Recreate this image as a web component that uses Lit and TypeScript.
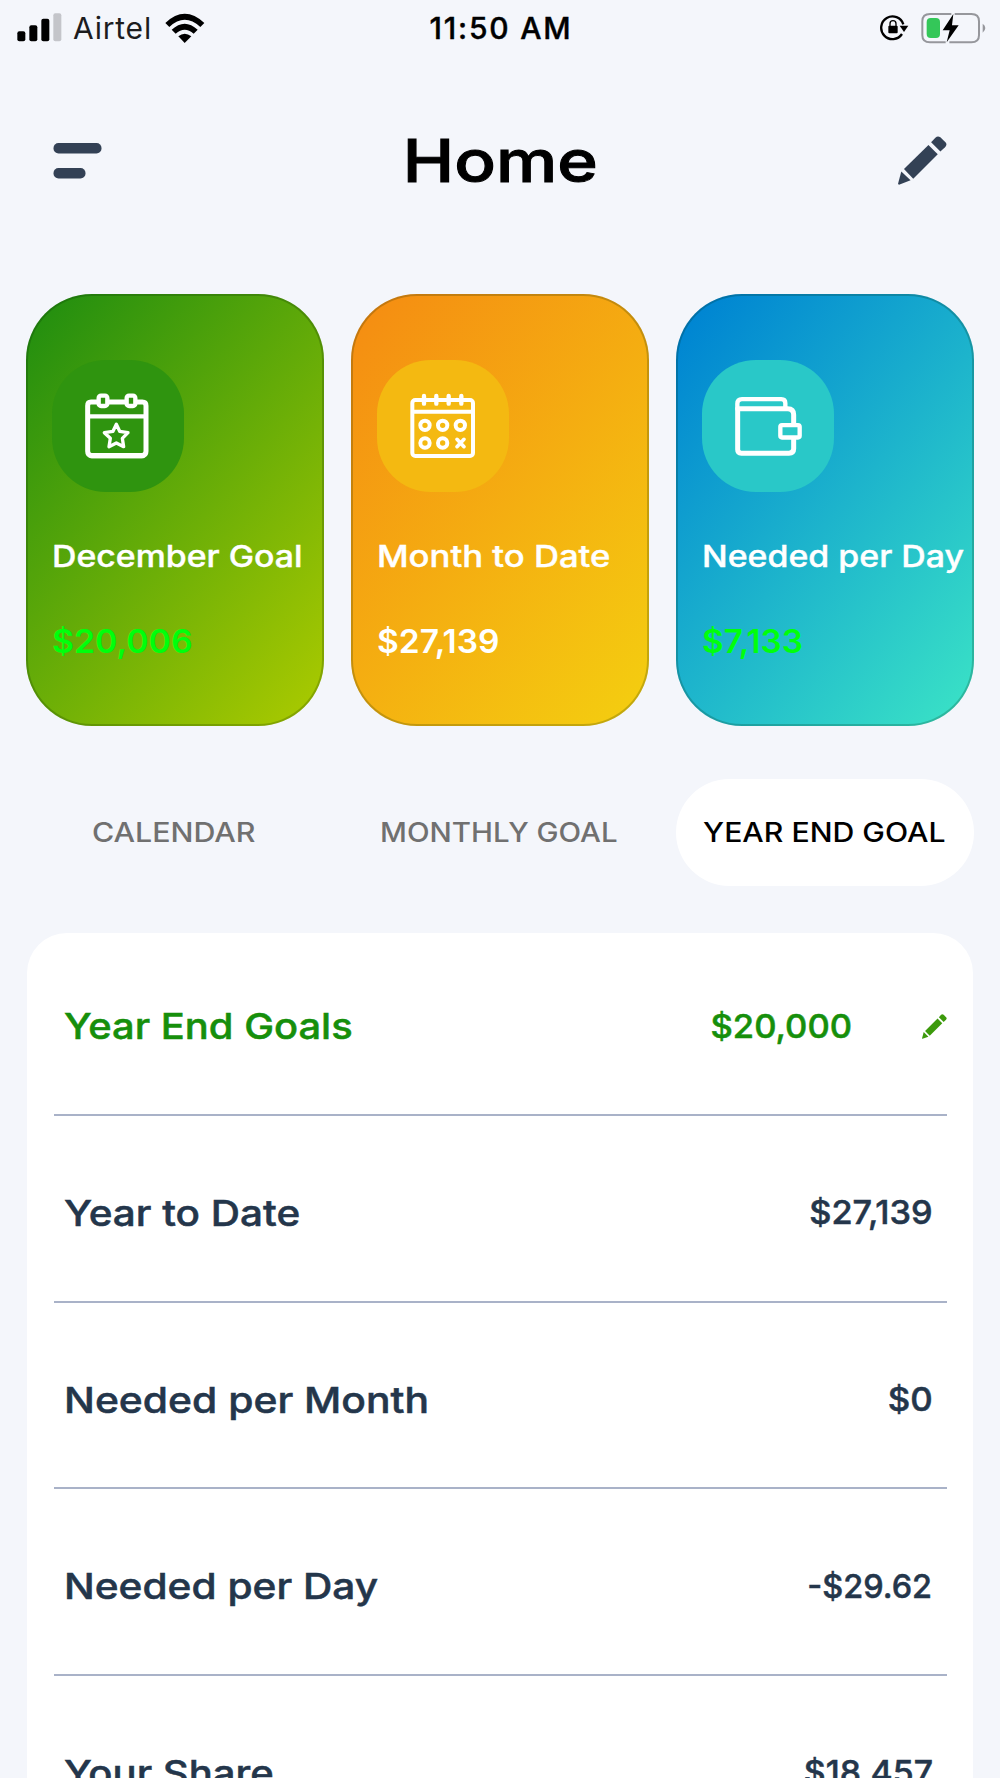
import { LitElement, html, svg, css } from "lit";
import { customElement, property } from "lit/decorators.js";
import { styleMap } from "lit/directives/style-map.js";
import { classMap } from "lit/directives/class-map.js";

type Origin = "left" | "center" | "right";

/* A single line of text whose glyphs are widened by a factor. */
@customElement("wide-text")
class WideText extends LitElement {
  @property({ type: Number }) factor = 1;
  @property() origin: Origin = "left";
  static styles = css`
    :host { display: inline-block; white-space: nowrap; line-height: 1; }
    .text { display: inline-block; }
  `;
  render() {
    return html`<span class="text" style=${styleMap({
      transform: `scaleX(${this.factor})`,
      transformOrigin: `${this.origin} center`,
    })}><slot></slot></span>`;
  }
}

const pencil = html`<svg viewBox="54 49 148 148" fill="currentColor">
  <path d="M64 156 L92 183 L57 196 Q54 196 54.500 192 Z"/>
  <path d="M72 149 L146 76 L174 104 L100 178 Z"/>
  <path d="M154 68 L167 54 Q174 48 182 53 L198 69 Q203 75 196 83 L182 96 Z"/>
</svg>`;

const starCalendar = html`<svg viewBox="97 240 396 396" fill="none" stroke="#fff" stroke-linejoin="round" stroke-linecap="round">
  <path stroke-width="15" d="M232 366H214Q204 366 204 377V514Q204 527 217 527H366Q379 527 379 514V377Q379 366 368 366H352M268 366H316"/>
  <path stroke-width="13" stroke-linecap="butt" d="M208 409H375"/>
  <path stroke-width="16" d="M216 527H368"/>
  <rect stroke-width="13" x="237" y="347" width="26" height="31" rx="7"/>
  <rect stroke-width="13" x="321" y="347" width="26" height="31" rx="7"/>
  <path stroke-width="10" d="M290 433L300 454L325 458L308 475L312 500L290 489L268 500L272 475L254 458L280 454Z"/>
</svg>`;

const rings = [[257, 436], [310, 436], [363, 436], [257, 489], [310, 489]];
const dotCalendar = html`<svg viewBox="113 240 396 396" fill="none" stroke="#fff" stroke-linejoin="round" stroke-linecap="round">
  <rect stroke-width="12" x="219" y="360" width="182" height="168" rx="9"/>
  <path stroke-width="12" d="M222 395H398"/>
  <path stroke-width="13" d="M254 348V371M291 348V371M328 348V371M366 348V371"/>
  ${rings.map(([x, y]) => svg`<circle stroke-width="12" cx=${x} cy=${y} r="14"/>`)}
  <path stroke-width="11" d="M353 478L374 500M374 478L353 500"/>
</svg>`;

const wallet = html`<svg viewBox="129 242 396 393" fill="none" stroke="#fff" stroke-width="15" stroke-linejoin="round" stroke-linecap="round">
  <path d="M404 430V405Q404 387 386 387H236V509Q236 520 247 520H390Q404 520 404 507V480"/>
  <path stroke-width="13" d="M235 387V372Q235 358 249 358H367Q379 358 379 370V384"/>
  <rect stroke-width="13" x="364" y="436" width="58" height="37" rx="5"/>
</svg>`;

const cards = [
  { kind: "green", icon: starCalendar, label: "December Goal", lf: 1.128, value: "$20,006", vf: 1.025, lime: true },
  { kind: "amber", icon: dotCalendar, label: "Month to Date", lf: 1.155, value: "$27,139", vf: 1.016, lime: false },
  { kind: "blue", icon: wallet, label: "Needed per Day", lf: 1.13, value: "$7,133", vf: 1.011, lime: true },
];

const tabs = [
  { label: "CALENDAR", f: 1.125, active: false },
  { label: "MONTHLY GOAL", f: 1.091, active: false },
  { label: "YEAR END GOAL", f: 1.119, active: true },
];

const rows = [
  { label: "Year End Goals", lf: 1.108, value: "$20,000", vf: 1.048, edit: true },
  { label: "Year to Date", lf: 1.124, value: "$27,139", vf: 1.04, edit: false },
  { label: "Needed per Month", lf: 1.134, value: "$0", vf: 1.055, edit: false },
  { label: "Needed per Day", lf: 1.129, value: "-$29.62", vf: 0.982, edit: false },
  { label: "Your Share", lf: 1.112, value: "$18,457", vf: 1.025, edit: false },
];

@customElement("app-root")
class AppRoot extends LitElement {
  static styles = css`
    :host {
      display: flex; flex-direction: column; box-sizing: border-box;
      width: 1000px; height: 1778px; overflow: hidden;
      background: #f4f6fb; color: #000;
      font-family: Inter, "Liberation Sans", sans-serif; font-weight: 500;
    }
    svg { display: block; }
    .status { flex: none; display: grid; grid-template-columns: 1fr auto 1fr; align-items: center; height: 55px; padding: 0 14px 0 17px; font-size: 30px; line-height: 1.2; }
    .status .side { display: flex; align-items: center; }
    .status .end { justify-content: flex-end; gap: 12px; }
    .carrier { font-weight: 400; letter-spacing: .8px; color: #1c1c1e; margin: 0 13px 0 11px; }
    .clock { letter-spacing: 1.8px; margin-right: 1px; -webkit-text-stroke: .4px; }
    .header { flex: none; display: grid; grid-template-columns: 1fr auto 1fr; align-items: center; height: 112px; margin-top: 49.500px; padding: 0 53px; font-size: 59px; -webkit-text-stroke: 1px; }
    .header svg { -webkit-text-stroke: 0; }
    .header .glyph { color: #334155; }
    .menu { width: 49px; height: 36px; }
    .edit { width: 49px; height: 49px; justify-self: end; }
    .cards { flex: none; display: grid; grid-template-columns: repeat(3, 298px); gap: 27px; padding: 0 26px; margin-top: 77px; }
    .card { box-sizing: border-box; height: 432.500px; border-radius: 66px; padding: 66.500px 0 0 26.400px; color: #fff; box-shadow: inset 0 0 0 2px rgba(0, 30, 0, .2); }
    .green { background: linear-gradient(130deg, #26900f 6%, #aaca00 98%); }
    .amber { background: linear-gradient(130deg, #f58f12 6%, #f4ce10 98%); }
    .blue { background: linear-gradient(130deg, #0086d2 6%, #3ae2c6 98%); }
    .badge { width: 132px; height: 132px; border-radius: 54px; }
    .green .badge { background: #2f940f; }
    .amber .badge { background: #f4b911; }
    .blue .badge { background: #29c8c8; }
    .badge svg { width: 132px; height: 132px; }
    .label { font-size: 30px; height: 30px; line-height: 30px; margin-top: 48.500px; display: flex; -webkit-text-stroke: .4px; }
    .value { font-size: 33px; height: 33px; line-height: 33px; margin-top: 54px; display: flex; font-weight: 600; }
    .lime { color: #00ff0c; }
    .tabs { flex: none; display: grid; grid-template-columns: repeat(3, 298px); gap: 27px; padding: 0 26px; margin-top: 53px; }
    .tab { box-sizing: border-box; padding-right: 2px; height: 106.500px; border-radius: 54px; display: flex; align-items: center; justify-content: center; font-size: 27px; color: #707070; }
    .tab.active { background: #fff; color: #000; }
    .panel { box-sizing: border-box; flex: none; height: 860px; margin: 47px 27px 0; padding: 0 26.500px; background: #fff; border-radius: 40px 40px 0 0; color: #24364b; }
    .row { box-sizing: border-box; height: 186.700px; padding: 9px 14px 0 10px; border-bottom: 2.500px solid #a9b2c8; display: flex; align-items: center; justify-content: space-between; font-size: 36px; -webkit-text-stroke: .5px; }
    .row.first { height: 183.500px; padding-top: 6px; padding-right: 0; color: #168f0b; }
    .amount { display: flex; align-items: center; font-size: 33px; }
    .pen { width: 25px; height: 25px; margin-left: 69px; color: #3c9a0c; }
  `;

  render() {
    return html`
      <div class="status">
        <div class="side">
          <svg width="45" height="30" viewBox="51 35 135 90">
            <rect x="52" y="90" width="24" height="30" rx="6"/><rect x="88" y="72" width="24" height="48" rx="6"/>
            <rect x="124" y="52" width="24" height="68" rx="6"/><rect x="160" y="36" width="24" height="84" rx="6" fill="#c4c5ca"/>
          </svg>
          <span class="carrier">Airtel</span>
          <svg width="40" height="30" viewBox="495 35 120 90">
            <path d="M496 65Q554 10 613 65L601 77Q554 34 508 77Z"/>
            <path d="M515 85Q554 49 593 85L581 97Q554 73 527 97Z"/>
            <path d="M535 105Q554 89 574 105L554 125Z"/>
          </svg>
        </div>
        <span class="clock">11:50 AM</span>
        <div class="side end">
          <svg width="29" height="27" viewBox="29 42 87 81">
            <path d="M99 73A34 34 0 1 0 95 102" fill="none" stroke="#000" stroke-width="7"/>
            <path d="M88 77H114L101 96Z"/>
            <rect x="54" y="77" width="28" height="23" rx="3"/>
            <path d="M59 79V71Q59 62 68 62T77 71V79" fill="none" stroke="#000" stroke-width="4"/>
          </svg>
          <svg width="65" height="32" viewBox="153 30 195 96">
            <path d="M244 36H180Q157 36 157 58V100Q157 121 180 121H227M254 36H304Q327 36 327 58V100Q327 121 304 121H238" fill="none" stroke="#96979c" stroke-width="6"/>
            <rect x="170" y="48" width="40" height="60" rx="12" fill="#34c759"/>
            <path d="M338 65Q346 70 346 78T338 92Z" fill="#96979c"/>
            <path d="M250 36L218 85H239L230 121L266 70H246Z" stroke="#f4f6fb" stroke-width="4" paint-order="stroke"/>
          </svg>
        </div>
      </div>

      <div class="header">
        <svg class="glyph menu" viewBox="0 0 49 36" fill="currentColor">
          <rect x=".5" y="0" width="48" height="10.500" rx="5"/><rect x=".5" y="25" width="32" height="10.500" rx="5"/>
        </svg>
        <wide-text origin="center" factor="1.17">Home</wide-text>
        <div class="glyph edit">${pencil}</div>
      </div>

      <div class="cards">
        ${cards.map((c) => html`<div class="card ${c.kind}">
          <div class="badge">${c.icon}</div>
          <div class="label"><wide-text factor=${c.lf}>${c.label}</wide-text></div>
          <div class=${classMap({ value: true, lime: c.lime })}><wide-text factor=${c.vf}>${c.value}</wide-text></div>
        </div>`)}
      </div>

      <div class="tabs">
        ${tabs.map((t) => html`<div class=${classMap({ tab: true, active: t.active })}>
          <wide-text origin="center" factor=${t.f}>${t.label}</wide-text>
        </div>`)}
      </div>

      <div class="panel">
        ${rows.map((r, i) => html`<div class=${classMap({ row: true, first: i === 0 })}>
          <wide-text factor=${r.lf}>${r.label}</wide-text>
          <div class="amount">
            <wide-text origin="right" factor=${r.vf}>${r.value}</wide-text>
            ${r.edit ? html`<div class="pen">${pencil}</div>` : null}
          </div>
        </div>`)}
      </div>
    `;
  }
}
